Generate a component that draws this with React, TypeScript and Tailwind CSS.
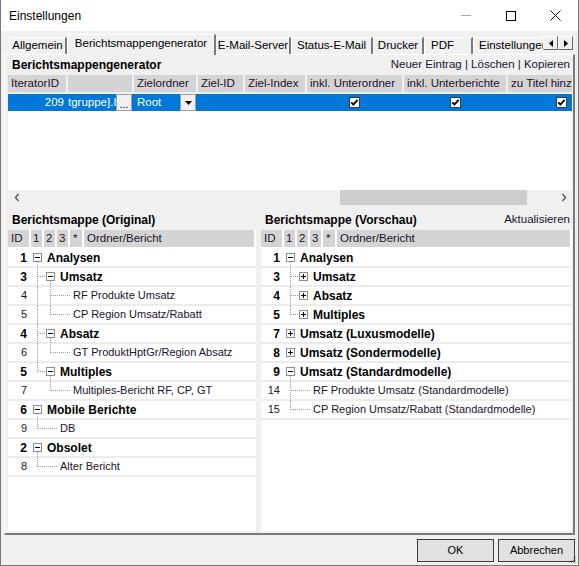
import React from "react";

type TNode = { id: number; label: string; children?: TNode[]; collapsed?: boolean };
type Row = {
  id: number;
  label: string;
  depth: number;
  folder: boolean;
  open: boolean;
  last: boolean;
  anc: boolean[];
};

function flatten(nodes: TNode[], depth = 0, anc: boolean[] = [], out: Row[] = []): Row[] {
  nodes.forEach((n, i) => {
    const last = i === nodes.length - 1;
    const folder = !!n.children;
    const open = folder && !n.collapsed;
    out.push({ id: n.id, label: n.label, depth, folder, open, last, anc });
    if (open && n.children) flatten(n.children, depth + 1, [...anc, last], out);
  });
  return out;
}

const leftTree: TNode[] = [
  {
    id: 1,
    label: "Analysen",
    children: [
      {
        id: 3,
        label: "Umsatz",
        children: [
          { id: 4, label: "RF Produkte Umsatz" },
          { id: 5, label: "CP Region Umsatz/Rabatt" },
        ],
      },
      { id: 4, label: "Absatz", children: [{ id: 6, label: "GT ProduktHptGr/Region Absatz" }] },
      { id: 5, label: "Multiples", children: [{ id: 7, label: "Multiples-Bericht RF, CP, GT" }] },
    ],
  },
  { id: 6, label: "Mobile Berichte", children: [{ id: 9, label: "DB" }] },
  { id: 2, label: "Obsolet", children: [{ id: 8, label: "Alter Bericht" }] },
];

const rightTree: TNode[] = [
  {
    id: 1,
    label: "Analysen",
    children: [
      { id: 3, label: "Umsatz", collapsed: true, children: [] },
      { id: 4, label: "Absatz", collapsed: true, children: [] },
      { id: 5, label: "Multiples", collapsed: true, children: [] },
    ],
  },
  { id: 7, label: "Umsatz (Luxusmodelle)", collapsed: true, children: [] },
  { id: 8, label: "Umsatz (Sondermodelle)", collapsed: true, children: [] },
  {
    id: 9,
    label: "Umsatz (Standardmodelle)",
    children: [
      { id: 14, label: "RF Produkte Umsatz (Standardmodelle)" },
      { id: 15, label: "CP Region Umsatz/Rabatt (Standardmodelle)" },
    ],
  },
];

const TEXT = "text-[#22122c]";
const DOTTED =
  "bg-[#efefef] bg-[image:conic-gradient(#f8f8f8_25%,#e8e8e8_0_50%,#f8f8f8_0_75%,#e8e8e8_0)] bg-[length:2px_2px]";

function TreeLines({ r }: { r: Row }) {
  const xc = (d: number) => 29.5 + 13 * d;
  const mid = 8.5;
  const dot = { stroke: "#9c9c9c", strokeDasharray: "1 1", strokeWidth: 1 };
  const els: React.ReactNode[] = [];
  for (let k = 1; k < r.depth; k++) {
    if (!r.anc[k]) els.push(<line key={"a" + k} x1={xc(k - 1)} y1={0} x2={xc(k - 1)} y2={19} {...dot} />);
  }
  if (r.depth > 0) {
    const x = xc(r.depth - 1);
    els.push(<line key="v" x1={x} y1={0} x2={x} y2={r.last ? mid : 19} {...dot} />);
    els.push(
      <line key="h" x1={x} y1={mid} x2={r.folder ? xc(r.depth) - 4.5 : xc(r.depth) + 6} y2={mid} {...dot} />
    );
  }
  if (r.folder) {
    const x = xc(r.depth);
    if (r.open) els.push(<line key="d" x1={x} y1={13} x2={x} y2={19} {...dot} />);
    els.push(<rect key="b" x={x - 4} y={4.5} width={8} height={8} fill="white" stroke="#8e8e8e" />);
    els.push(<line key="m" x1={x - 2.5} y1={mid} x2={x + 2.5} y2={mid} stroke="#000" strokeWidth={1} />);
    if (!r.open) els.push(<line key="p" x1={x} y1={mid - 2.5} x2={x} y2={mid + 2.5} stroke="#000" strokeWidth={1} />);
  }
  return (
    <svg className="absolute left-0 top-0 pointer-events-none" width="90" height="19" shapeRendering="crispEdges">
      {els}
    </svg>
  );
}

function TreeRow({ r }: { r: Row }) {
  const ml = ["ml-[18px]", "ml-[31px]", "ml-[44px]"][r.depth];
  const style = r.folder ? "font-bold text-[12px] text-black" : `text-[11px] ${TEXT}`;
  return (
    <div className="relative h-[19px] border-b-2 border-[#ececec] flex items-center shrink-0">
      <TreeLines r={r} />
      <span className={`w-[21px] text-right pr-[2px] shrink-0 leading-none ${style}`}>{r.id}</span>
      <span className={`${ml} whitespace-nowrap leading-none ${style}`}>{r.label}</span>
    </div>
  );
}

function TreeBox({ nodes }: { nodes: TNode[] }) {
  const rows = flatten(nodes);
  const hc = `bg-[#d4d4d4] h-full flex items-center shrink-0 text-[11.5px] ${TEXT}`;
  return (
    <div className="h-[301px] bg-white flex flex-col overflow-hidden">
      <div className="h-[17px] flex gap-[2px] pr-[2px] shrink-0">
        <div className={`${hc} w-[21px] pl-[3px]`}>ID</div>
        <div className={`${hc} w-[11px] pl-[2px]`}>1</div>
        <div className={`${hc} w-[11px] pl-[2px]`}>2</div>
        <div className={`${hc} w-[11px] pl-[2px]`}>3</div>
        <div className={`${hc} w-[12px] pl-[3px]`}>*</div>
        <div className={`${hc} flex-1 pl-[3px]`}>Ordner/Bericht</div>
      </div>
      <div className="mt-[2px] flex flex-col">
        {rows.map((r, i) => (
          <TreeRow key={i} r={r} />
        ))}
      </div>
    </div>
  );
}

const Check = () => (
  <svg width="11" height="11" viewBox="0 0 11 11">
    <rect x="0.5" y="0.5" width="10" height="10" fill="white" stroke="#3a3a3a" />
    <path d="M2.3 5.3 L4.4 7.6 L8.6 2.8" fill="none" stroke="black" strokeWidth="1.8" />
  </svg>
);

const cols = [
  { w: "w-[58px]", label: "IteratorID" },
  { w: "w-[64px]", label: "" },
  { w: "w-[62px]", label: "Zielordner" },
  { w: "w-[45px]", label: "Ziel-ID" },
  { w: "w-[60px]", label: "Ziel-Index" },
  { w: "w-[95px]", label: "inkl. Unterordner" },
  { w: "w-[102px]", label: "inkl. Unterberichte" },
  { w: "w-[106px]", label: "zu Titel hinzufügen" },
];

function Grid() {
  return (
    <div className="h-[130px] flex flex-col overflow-hidden shrink-0">
      <div className="h-[17px] flex gap-[2px] shrink-0">
        {cols.map((c, i) => (
          <div
            key={i}
            className={`${c.w} shrink-0 h-full bg-[#d4d4d4] pl-[3px] flex items-center whitespace-nowrap overflow-hidden text-[11.5px] ${TEXT}`}
          >
            {c.label}
          </div>
        ))}
      </div>
      <div className="mt-[2px] flex-1 bg-white flex flex-col">
        <div className="h-[17px] bg-[#0078d7] flex gap-[2px] shrink-0 text-white text-[11.5px]">
          <div className="w-[58px] shrink-0 flex items-center justify-end pr-[2px]">209</div>
          <div className="w-[64px] shrink-0 flex items-center">
            <span className="flex-1 overflow-hidden whitespace-nowrap">tgruppe].8</span>
            <div className="w-[16px] h-full shrink-0 bg-[#f0f0f0] border border-[#a0a0a0] flex items-end justify-center text-black text-[11px] leading-[12px]">
              ...
            </div>
          </div>
          <div className="w-[62px] shrink-0 flex items-center">
            <span className="flex-1 pl-[3px]">Root</span>
            <div className="w-[16px] h-full shrink-0 bg-[#f0f0f0] border border-[#a0a0a0] flex items-center justify-center">
              <svg width="7" height="4" viewBox="0 0 7 4">
                <path d="M0 0 H7 L3.5 4 Z" fill="black" />
              </svg>
            </div>
          </div>
          <div className="w-[45px] shrink-0" />
          <div className="w-[60px] shrink-0" />
          <div className="w-[95px] shrink-0 flex items-center justify-center">
            <Check />
          </div>
          <div className="w-[102px] shrink-0 flex items-center justify-center">
            <Check />
          </div>
          <div className="w-[106px] shrink-0 flex items-center justify-center">
            <Check />
          </div>
        </div>
      </div>
      <div className="h-[15px] bg-[#f0f0f0] flex shrink-0">
        <div className="w-[17px] flex items-center justify-center">
          <svg width="6" height="9" viewBox="0 0 6 9">
            <path d="M4.5 1 L1.5 4.5 L4.5 8" fill="none" stroke="#606060" strokeWidth="1.6" />
          </svg>
        </div>
        <div className="flex-1 flex">
          <div className="w-[315px]" />
          <div className="w-[187px] h-full bg-[#cdcdcd]" />
        </div>
        <div className="w-[17px] flex items-center justify-center">
          <svg width="6" height="9" viewBox="0 0 6 9">
            <path d="M1.5 1 L4.5 4.5 L1.5 8" fill="none" stroke="#606060" strokeWidth="1.6" />
          </svg>
        </div>
      </div>
    </div>
  );
}

function Tab({ label, w, selected, left }: { label: string; w: string; selected?: boolean; left?: boolean }) {
  if (selected)
    return (
      <div
        className={`${w} h-[21px] -mb-px relative z-10 shrink-0 bg-[#f0f0f0] border-t border-l border-white border-r-2 border-r-[#7a7a7a] flex items-center justify-center pb-[2px] text-[11.5px] text-black whitespace-nowrap`}
      >
        {label}
      </div>
    );
  return (
    <div
      className={`${w} h-[17px] shrink-0 overflow-hidden bg-[#f0f0f0] border-t border-l border-white border-r-2 border-r-[#7a7a7a] flex items-center ${left ? "justify-start pl-[6px]" : "justify-center"} text-[11.5px] text-black whitespace-nowrap`}
    >
      {label}
    </div>
  );
}

function ArrowBtn({ dir }: { dir: "l" | "r" }) {
  return (
    <div className="w-[15px] h-[14px] shrink-0 bg-[#f0f0f0] border-t border-l border-white border-r border-b border-r-[#696969] border-b-[#696969] flex items-center justify-center">
      <svg width="4" height="7" viewBox="0 0 4 7">
        <path d={dir === "l" ? "M4 0 V7 L0 3.5 Z" : "M0 0 V7 L4 3.5 Z"} fill="black" />
      </svg>
    </div>
  );
}

export default function App() {
  return (
    <div className="relative w-[579px] h-[566px] overflow-hidden bg-[#f0f0f0] border-x border-b border-[#777777] flex flex-col font-['Liberation_Sans',Arial,sans-serif]">
      {/* Title bar */}
      <div className="h-[31px] bg-white flex items-center shrink-0">
        <span className="pl-[8px] text-[12px] text-black">Einstellungen</span>
        <div className="ml-auto flex h-full">
          <div className="w-[45px] flex items-center justify-center">
            <div className="w-[10px] h-px bg-[#a8a8a8]" />
          </div>
          <div className="w-[45px] flex items-center justify-center">
            <div className="w-[10px] h-[10px] border border-black" />
          </div>
          <div className="w-[45px] flex items-center justify-center">
            <svg width="11" height="11" viewBox="0 0 11 11">
              <path d="M0.5 0.5 L10.5 10.5 M10.5 0.5 L0.5 10.5" stroke="black" strokeWidth="1" />
            </svg>
          </div>
        </div>
      </div>

      <div className="flex-1 flex flex-col px-[3px]">
        {/* Tabs */}
        <div className="h-[23px] flex items-end pl-[5px] shrink-0">
          <Tab label="Allgemein" w="w-[58px]" />
          <Tab label="Berichtsmappengenerator" w="w-[149px]" selected />
          <Tab label="E-Mail-Server" w="w-[75px]" />
          <Tab label="Status-E-Mail" w="w-[82px]" />
          <Tab label="Drucker" w="w-[51px]" />
          <Tab label="PDF" w="w-[49px]" left />
          <div className="w-[70px] h-[17px] shrink-0 overflow-hidden bg-[#f0f0f0] border-t border-l border-white flex items-center pl-[5px] text-[11.5px] text-black whitespace-nowrap">
            Einstellungen
          </div>
          <div className="self-start mt-[5px] flex">
            <ArrowBtn dir="l" />
            <ArrowBtn dir="r" />
          </div>
        </div>

        {/* Panel */}
        <div
          className={`h-[481px] shrink-0 border-l border-t border-l-white border-t-white border-r-2 border-b-2 border-r-[#7a7a7a] border-b-[#7a7a7a] flex flex-col pl-[3px] pr-[1px] ${DOTTED}`}
        >
          <div className="h-[20px] flex items-center shrink-0 pl-[4px] pr-[2px] pb-[1px]">
            <span className="font-bold text-[12px] text-black">Berichtsmappengenerator</span>
            <span className={`ml-auto text-[11.5px] ${TEXT}`}>Neuer Eintrag | Löschen | Kopieren</span>
          </div>
          <Grid />
          <div className="mt-[5px] flex gap-[5px]">
            <div className="w-[248px] shrink-0 flex flex-col">
              <div className="h-[20px] flex items-center pl-[4px]">
                <span className="font-bold text-[12px] text-black">Berichtsmappe (Original)</span>
              </div>
              <TreeBox nodes={leftTree} />
            </div>
            <div className="flex-1 flex flex-col">
              <div className="h-[20px] flex items-center pl-[4px] pr-[2px]">
                <span className="font-bold text-[12px] text-black">Berichtsmappe (Vorschau)</span>
                <span className={`ml-auto text-[11.5px] ${TEXT}`}>Aktualisieren</span>
              </div>
              <TreeBox nodes={rightTree} />
            </div>
          </div>
        </div>

        {/* Bottom */}
        <div className="flex-1 flex justify-end items-start gap-[4px] pt-[4px]">
          <div className="w-[77px] h-[23px] bg-[#e1e1e1] border border-[#3c3c3c] flex items-center justify-center text-[11px] text-black">
            OK
          </div>
          <div className="w-[77px] h-[23px] bg-[#e1e1e1] border border-[#3c3c3c] flex items-center justify-center text-[11px] text-black">
            Abbrechen
          </div>
        </div>
      </div>
      <svg className="absolute right-0 bottom-0" width="10" height="10" viewBox="0 0 10 10">
        <g fill="#a0a0a0">
          <rect x="7" y="1" width="1" height="1" />
          <rect x="5" y="3" width="1" height="1" />
          <rect x="7" y="3" width="1" height="1" />
          <rect x="3" y="5" width="1" height="1" />
          <rect x="5" y="5" width="1" height="1" />
          <rect x="7" y="5" width="1" height="1" />
          <rect x="1" y="7" width="1" height="1" />
          <rect x="3" y="7" width="1" height="1" />
          <rect x="5" y="7" width="1" height="1" />
          <rect x="7" y="7" width="1" height="1" />
        </g>
      </svg>
    </div>
  );
}
